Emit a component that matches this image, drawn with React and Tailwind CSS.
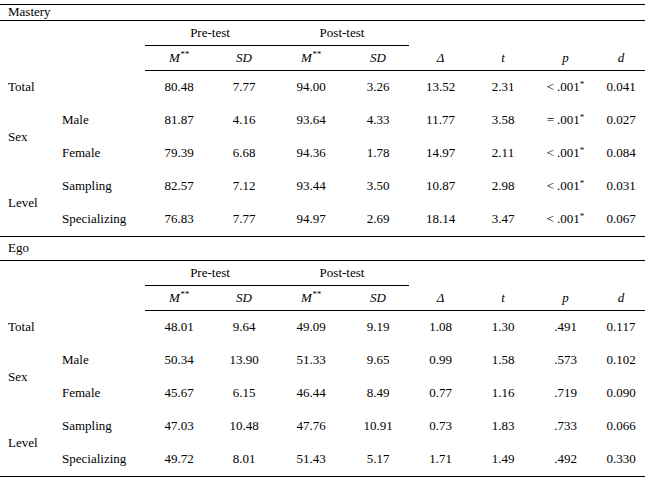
// App.jsx — pre/post test table for Mastery and Ego orientations.
const COLS = "grid grid-cols-[55px_90px_68px_62px_72px_62px_63px_62px_63px_48px]";
const CELL = "flex items-center justify-center pb-[2px]";

const mastery = [
  { group: "Total", sub: "", vals: ["80.48", "7.77", "94.00", "3.26", "13.52", "2.31"], p: ["<", ".001", true], d: "0.041" },
  { group: "Sex", sub: "Male", vals: ["81.87", "4.16", "93.64", "4.33", "11.77", "3.58"], p: ["=", ".001", true], d: "0.027" },
  { group: null, sub: "Female", vals: ["79.39", "6.68", "94.36", "1.78", "14.97", "2.11"], p: ["<", ".001", true], d: "0.084" },
  { group: "Level", sub: "Sampling", vals: ["82.57", "7.12", "93.44", "3.50", "10.87", "2.98"], p: ["<", ".001", true], d: "0.031" },
  { group: null, sub: "Specializing", vals: ["76.83", "7.77", "94.97", "2.69", "18.14", "3.47"], p: ["<", ".001", true], d: "0.067" },
];

const ego = [
  { group: "Total", sub: "", vals: ["48.01", "9.64", "49.09", "9.19", "1.08", "1.30"], p: ["", ".491", false], d: "0.117" },
  { group: "Sex", sub: "Male", vals: ["50.34", "13.90", "51.33", "9.65", "0.99", "1.58"], p: ["", ".573", false], d: "0.102" },
  { group: null, sub: "Female", vals: ["45.67", "6.15", "46.44", "8.49", "0.77", "1.16"], p: ["", ".719", false], d: "0.090" },
  { group: "Level", sub: "Sampling", vals: ["47.03", "10.48", "47.76", "10.91", "0.73", "1.83"], p: ["", ".733", false], d: "0.066" },
  { group: null, sub: "Specializing", vals: ["49.72", "8.01", "51.43", "5.17", "1.71", "1.49"], p: ["", ".492", false], d: "0.330" },
];

function Star({ n = "**" }) {
  return <sup className="relative -top-[3px] text-[9px]">{n}</sup>;
}

function Header() {
  return (
    <>
      <div className={COLS}>
        <div className="col-span-2 h-[25px]" />
        <div className={`${CELL} col-span-2 h-[25px] border-b border-black`}>Pre-test</div>
        <div className={`${CELL} col-span-2 h-[25px] border-b border-black`}>Post-test</div>
        <div className="col-span-4 h-[25px]" />
      </div>
      <div className={`${COLS} italic`}>
        <div className="col-span-2 h-[25px]" />
        <div className={`${CELL} h-[25px] border-b border-black`}>
          M<Star />
        </div>
        <div className={`${CELL} h-[25px] border-b border-black`}>SD</div>
        <div className={`${CELL} h-[25px] border-b border-black`}>
          M<Star />
        </div>
        <div className={`${CELL} h-[25px] border-b border-black`}>SD</div>
        <div className={`${CELL} h-[25px] border-b border-black`}>Δ</div>
        <div className={`${CELL} h-[25px] border-b border-black`}>t</div>
        <div className={`${CELL} h-[25px] border-b border-black`}>p</div>
        <div className={`${CELL} h-[25px] border-b border-black`}>d</div>
      </div>
    </>
  );
}

function Body({ rows }) {
  return (
    <div className={`${COLS} grid-rows-[33px_33px_33px_33px_33px] border-b border-black`}>
      {rows.map((r, i) => (
        <div key={i} className="contents">
          {r.group !== null &&
            (r.sub === "" ? (
              <div className="col-span-2 flex items-center pb-[2px] pl-[8px]">{r.group}</div>
            ) : (
              <div className="row-span-2 flex items-center pb-[2px] pl-[8px]">{r.group}</div>
            ))}
          {r.sub !== "" && <div className="col-start-2 flex items-center pb-[2px] pl-[7px]">{r.sub}</div>}
          {r.vals.map((v, j) => (
            <div key={j} className={CELL}>{v}</div>
          ))}
          <div className={CELL}>
            {r.p[0] && <span className="mr-[3px]">{r.p[0]}</span>}
            {r.p[1]}
            {r.p[2] && <Star n="*" />}
          </div>
          <div className={CELL}>{r.d}</div>
        </div>
      ))}
    </div>
  );
}

export default function App() {
  return (
    <div className="h-[478px] w-[649px] overflow-hidden bg-white font-['Liberation_Serif'] text-[13px] leading-none text-black">
      <div className="w-[645px] pt-[4px]">
        <div className="flex h-[17px] items-center border-y border-black pb-[2px] pl-[8px]">Mastery</div>
        <Header />
        <Body rows={mastery} />
        <div className="flex h-[24px] items-center border-b border-black pb-[2px] pl-[8px]">Ego</div>
        <Header />
        <Body rows={ego} />
        <div className="pt-[1px] pl-[4px]">
          <Star n="*" />Based on modelling of mean ranks, significant at p &lt; 0.05.
        </div>
      </div>
    </div>
  );
}
